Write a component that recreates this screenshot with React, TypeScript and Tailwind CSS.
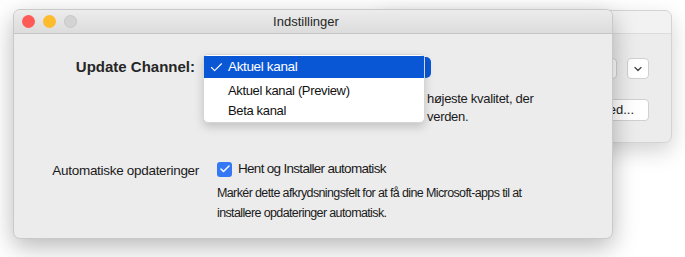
import { Check, ChevronDown } from "lucide-react";

const FONT = { fontFamily: '"Liberation Sans", Arial, sans-serif' };

function BackWindow() {
  return (
    <div className="absolute left-[380px] top-[10px] w-[292px] h-[133px] rounded-[7px] bg-[#ececec] border border-[#d4d4d4] shadow-[0_8px_22px_rgba(0,0,0,0.18)] overflow-hidden">
      <div className="h-[23px] bg-[#f2f2f2] border-b border-[#dcdcdc]" />
      <div className="flex justify-end pr-[22px] pt-[24px] gap-[10px]">
        <div className="w-[20px] h-[21px] rounded-[4px] bg-white border border-[#d0d0d0]" />
        <div className="w-[22px] h-[21px] rounded-[4px] bg-white border border-[#d0d0d0] flex items-center justify-center text-[#444]">
          <ChevronDown size={12} strokeWidth={2.5} />
        </div>
      </div>
      <div className="flex justify-end pr-[22px] pt-[20px]">
        <div className="w-[70px] h-[22px] rounded-[4px] bg-white border border-[#d0d0d0] text-[13px] text-[#222] flex items-center justify-end pr-[14px]">
          ed...
        </div>
      </div>
    </div>
  );
}

function ChannelMenu() {
  return (
    <div className="absolute left-[189px] top-[20px] w-[222px] h-[69px] rounded-[5px] bg-white border border-[#d6d6d6] shadow-[0_4px_10px_rgba(0,0,0,0.18)] py-[1px] text-[13px] tracking-[-0.35px] text-[#111]">
      <div className="h-[22px] bg-[#0a57d6] text-white text-[13.5px] flex items-center">
        <span className="w-[24px] pl-[5px] flex">
          <Check size={15} strokeWidth={1.75} />
        </span>
        <span>Aktuel kanal</span>
      </div>
      <div className="mt-[3px] h-[20px] flex items-center pl-[24px]">Aktuel kanal (Preview)</div>
      <div className="h-[19px] flex items-center pl-[24px]">Beta kanal</div>
    </div>
  );
}

function FrontWindow() {
  return (
    <div className="absolute left-[13px] top-[9px] w-[600px] h-[230px] rounded-[7px] bg-[#ececec] border border-[#c9c9c9] shadow-[0_8px_24px_rgba(0,0,0,0.28)] overflow-hidden">
      <div className="relative h-[24px] bg-gradient-to-b from-[#ececec] to-[#dcdcdc] border-b border-[#c4c4c4] flex items-center pl-[8px] gap-[8px]">
        <span className="w-[13px] h-[13px] rounded-full bg-[#fd5b58]" />
        <span className="w-[13px] h-[13px] rounded-full bg-[#fdbc2e]" />
        <span className="w-[13px] h-[13px] rounded-full bg-[#d3d3d3] border border-[#c6c6c6]" />
        <span className="absolute inset-0 flex items-center justify-center pr-[14px] text-[13px] text-[#262626]">
          Indstillinger
        </span>
      </div>

      <div className="relative pt-[22px]">
        <div className="flex items-center h-[22px]">
          <span className="w-[181px] text-right text-[15px] font-bold text-[#262626]">Update Channel:</span>
          <div className="ml-[9px] w-[227px] h-[21px] rounded-[5px] bg-[#0a57d6]" />
        </div>
        <div className="pl-[413px] pt-[12px] text-[13px] leading-[18px] tracking-[-0.3px] text-[#1a1a1a]">
          <div>højeste kvalitet, der</div>
          <div>verden.</div>
        </div>
        <ChannelMenu />
      </div>

      <div className="flex mt-[34px] text-[13.5px] text-[#1a1a1a] tracking-[-0.3px]">
        <span className="w-[185px] text-right pt-[1px]">Automatiske opdateringer</span>
        <div className="ml-[18px]">
          <div className="flex items-center gap-[6px] h-[18px]">
            <span className="w-[15px] h-[15px] rounded-[3px] bg-[#3478f6] flex items-center justify-center text-white">
              <Check size={12} strokeWidth={3} />
            </span>
            <span className="tracking-[-0.7px]">Hent og Installer automatisk</span>
          </div>
          <div className="mt-[5px] text-[12.5px] leading-[20px] tracking-[-0.62px]">
            <div>Markér dette afkrydsningsfelt for at få dine Microsoft-apps til at</div>
            <div>installere opdateringer automatisk.</div>
          </div>
        </div>
      </div>
    </div>
  );
}

export default function App() {
  return (
    <div className="relative w-[685px] h-[257px] bg-white overflow-hidden" style={FONT}>
      <BackWindow />
      <FrontWindow />
    </div>
  );
}
